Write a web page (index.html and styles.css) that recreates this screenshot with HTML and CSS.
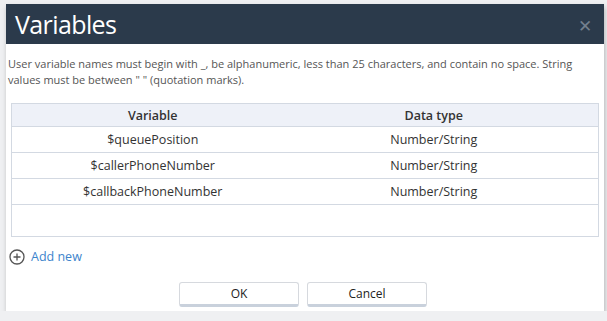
FILE: index.html
```html
<!DOCTYPE html>
<html lang="en">
<head>
	<meta charset="UTF-8">
	<title>Variables</title>
	<link rel="stylesheet" href="styles.css">
</head>
<body>
	<div class="dialog">
		<div class="dialog-head">
			<h1>Variables</h1>
			<span class="close">&#x2715;</span>
		</div>
		<div class="dialog-body">
			<p class="hint">User variable names must begin with _, be alphanumeric, less than 25 characters, and contain no space. String values must be between " " (quotation marks).</p>
			<table class="vars">
				<thead>
					<tr><th class="col-name">Variable</th><th class="col-type">Data type</th></tr>
				</thead>
				<tbody>
					<tr><td>$queuePosition</td><td class="col-type">Number/String</td></tr>
					<tr><td>$callerPhoneNumber</td><td class="col-type">Number/String</td></tr>
					<tr><td>$callbackPhoneNumber</td><td class="col-type">Number/String</td></tr>
					<tr class="empty"><td></td><td></td></tr>
				</tbody>
			</table>
			<div class="add-new">
				<svg width="16" height="16" viewBox="0 0 16 16">
					<circle cx="8" cy="8" r="7" fill="none" stroke="#555" stroke-width="1.3"/>
					<path d="M8 4.5v7M4.5 8h7" stroke="#555" stroke-width="1.3"/>
				</svg>
				<span>Add new</span>
			</div>
			<div class="actions">
				<div class="btn">OK</div>
				<div class="btn">Cancel</div>
			</div>
		</div>
	</div>
</body>
</html>
```

FILE: styles.css
```css
*{
	margin: 0;
	padding: 0;
	box-sizing: border-box;
}
body{
	background: #eff0f2;
	font-family: "Open Sans", "Liberation Sans", sans-serif;
	padding: 4px 3px 0 6px;
}
.dialog{
	width: 598px;
	height: 307px;
	background: #fff;
	box-shadow: 1px 3px 5px rgba(0,0,0,0.25);
}
.dialog-head{
	height: 40px;
	background: #2b3a4b;
	display: flex;
	align-items: center;
	justify-content: space-between;
	padding: 0 12px 0 9px;
}
.dialog-head h1{
	color: #fff;
	font-size: 25px;
	font-weight: 500;
	letter-spacing: -0.6px;
}
.close{
	color: #737f8d;
	font-size: 17px;
	margin-top: 2px;
}
.dialog-body{
	padding: 12px 6px 0 2px;
}
.hint{
	font-size: 11px;
	line-height: 16px;
	color: #555;
	margin-bottom: 15px;
}
.vars{
	width: 588px;
	margin-left: 3px;
	border-collapse: collapse;
	font-size: 12.5px;
	color: #333;
	border: 1px solid #d3d9e2;
}
.vars th{
	height: 23px;
	background: #eef1f8;
	font-weight: 600;
	border-bottom: 1px solid #d3d9e2;
}
.vars td{
	height: 26px;
	text-align: center;
	border-bottom: 1px solid #d3d9e2;
}
.col-name{
	width: 282px;
}
.vars .col-type{
	padding-right: 24px;
}
.vars .empty td{
	height: 32px;
	border-bottom: none;
}
.add-new{
	display: flex;
	align-items: center;
	gap: 6px;
	margin: 11px 0 0 1px;
	font-size: 12.5px;
	color: #3c84cc;
}
.actions{
	display: flex;
	justify-content: center;
	gap: 8px;
	margin-top: 17px;
}
.btn{
	width: 120px;
	height: 25px;
	border: 1px solid #d6d9de;
	border-bottom: 3px solid #c9d1dc;
	border-radius: 3px;
	font-size: 12px;
	color: #222;
	text-align: center;
	line-height: 21px;
}
```
